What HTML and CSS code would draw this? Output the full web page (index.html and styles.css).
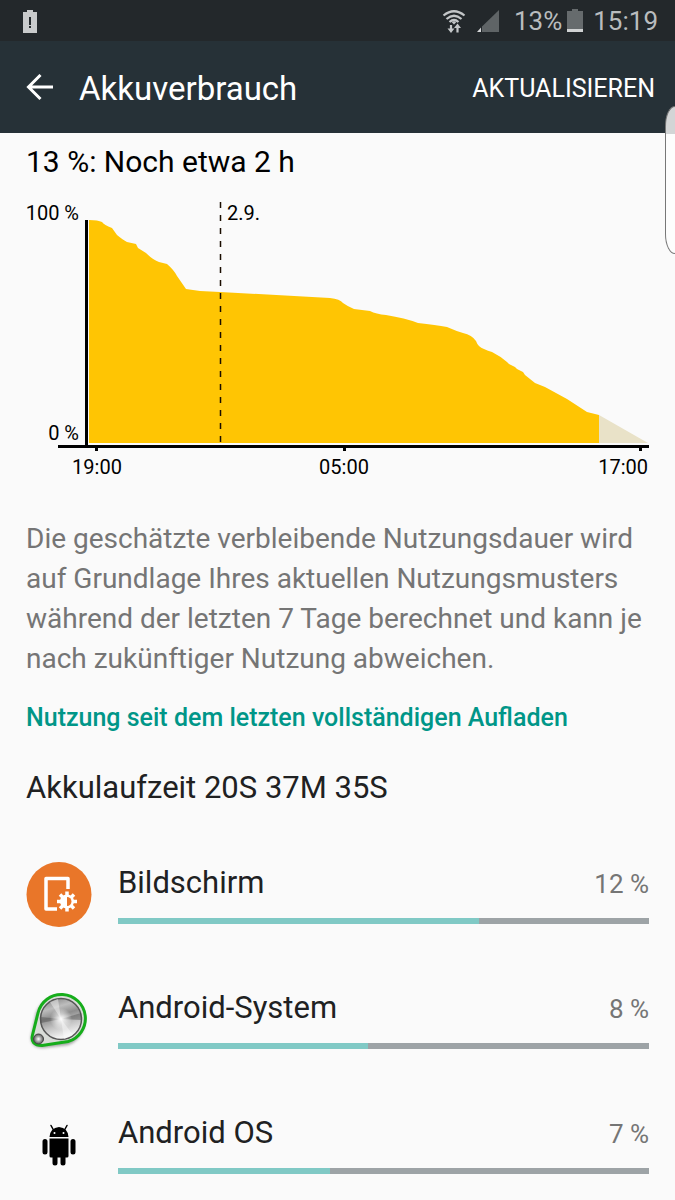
FILE: index.html
```html
<!DOCTYPE html>
<html lang="de">
<head>
<meta charset="utf-8">
<meta name="viewport" content="width=device-width, initial-scale=1">
<title>Akkuverbrauch</title>
<link rel="stylesheet" href="styles.css">
</head>
<body>
<div class="status">
  <svg class="status-alert" width="16" height="24" viewBox="0 0 16 24" role="img" aria-label="Akku schwach">
    <path fill="#c9cbcc" d="M5 1h6v2h4v21H1V3h4z"/>
    <path fill="#24292c" d="M7 8h2v8H7zM7 17h2v2H7z"/>
  </svg>
  <div class="status-right">
    <svg class="wifi" width="24" height="26" viewBox="0 0 24 26" role="img" aria-label="WLAN">
      <g fill="none" stroke="#c3c6c8" stroke-width="2.200">
        <path d="M1.500 7.500Q12-1 22.500 7.500"/>
        <path d="M4.500 11Q12 4.500 19.500 11"/>
        <path d="M7.500 14Q12 10 16.500 14"/>
        <path d="M9 17v5M15.500 24.500v-6"/>
      </g>
      <path fill="#c3c6c8" d="M9.800 14.300l2.200-1.300 2.200 1.300-2.200 2.200zM5.500 20.500h7L9 25zM12 20l3.500-4.500L19 20z"/>
    </svg>
    <svg class="signal" width="24" height="24" viewBox="0 0 24 24" role="img" aria-label="Mobilfunksignal">
      <path fill="#5f6466" d="M23 1v22H6V17.500z"/>
      <path fill="#d5d7d8" d="M5 18.500V23H1z"/>
    </svg>
    <span>13%</span>
    <svg class="battery" width="16" height="24" viewBox="0 0 16 24" role="img" aria-label="Akku">
      <path fill="#666b6d" d="M5 0h6v2h5v18H0V2h5z"/>
      <path fill="#d0d2d3" d="M0 20h16v3H0z"/>
    </svg>
    <span>15:19</span>
  </div>
</div>
<header class="appbar">
  <button class="back" type="button" aria-label="Zurück">
    <svg width="28" height="28" viewBox="0 0 28 28" aria-hidden="true"><path fill="none" stroke="#fff" stroke-width="3" d="M27 13H3M14.500 1L2.500 13l12 12"/></svg>
  </button>
  <h1 class="title">Akkuverbrauch</h1>
  <button class="refresh" type="button">AKTUALISIEREN</button>
  <div class="edge-handle"></div>
</header>
<main class="content">
  <h2 class="remaining">13 %: Noch etwa 2 h</h2>
  <svg class="chart" viewBox="0 0 623 288" role="img" aria-label="Akkuladung im Zeitverlauf">
    <path fill="#ffc503" d="M63 24Q72 24 76 26Q78 29 86 32L91 39Q97 44 101 46L110 48L112 52L120 57Q127 64 133 66L141 68Q148 74 151 80L160 93L174 95L194 96L304 102Q314 103 317 107Q321 110 328 113L344 115Q350 118 360 119Q379 122 392 127Q410 129 421 131Q430 135 437 137Q446 139 450 145Q452 151 458 153Q462 155 466 156Q474 160 481 166L483 168L489 171L491 173L497 176L499 179L509 187L519 191L541 203L561 216L573 219V247H63z"/>
    <path fill="#e9e2c8" d="M573 219L622 247H573z"/>
    <path stroke="#1a0d00" stroke-width="1.500" stroke-dasharray="6 7" d="M194.500 6V247"/>
    <path fill="#000" d="M59 24h3v225h-3zM32 249h591v3H32zM69 252h3v3h-3zM317 252h3v3h-3zM613 252h3v3h-3z"/>
    <text x="53" y="24" text-anchor="end">100 %</text>
    <text x="53" y="244" text-anchor="end">0 %</text>
    <text x="201" y="24">2.9.</text>
    <text x="71" y="278" text-anchor="middle">19:00</text>
    <text x="318" y="278" text-anchor="middle">05:00</text>
    <text x="622" y="278" text-anchor="end">17:00</text>
  </svg>
  <p class="note">Die geschätzte verbleibende Nutzungsdauer wird auf Grundlage Ihres aktuellen Nutzungsmusters während der letzten 7 Tage berechnet und kann je nach zukünftiger Nutzung abweichen.</p>
  <h2 class="section">Nutzung seit dem letzten vollständigen Aufladen</h2>
  <p class="runtime">Akkulaufzeit 20S 37M 35S</p>
  <ul class="apps">
    <li class="app">
      <svg class="app-icon" viewBox="0 0 66 66" aria-hidden="true">
        <circle cx="33" cy="32.500" r="32.500" fill="#e97629"/>
        <path fill="none" stroke="#fff" stroke-width="3.500" stroke-linejoin="round" d="M42 27V16.500H20V47H31"/>
        <circle cx="41" cy="39.500" r="7" fill="#fff"/>
        <path stroke="#fff" stroke-width="3.500" d="M41 29.500v20M31 39.500h20M34 32.500l14 14M48 32.500L34 46.500"/>
        <path fill="#e97629" d="M41 35a4.500 4.500 0 0 1 0 9z"/>
      </svg>
      <div class="usage">
        <div class="usage-head"><span>Bildschirm</span><span class="share">12 %</span></div>
        <div class="bar" role="progressbar" aria-label="Bildschirm" aria-valuenow="12"><div class="fill" style="width:68%"></div></div>
      </div>
    </li>
    <li class="app">
      <svg class="app-icon" viewBox="0 0 66 66" aria-hidden="true">
        <defs>
          <linearGradient id="metal" x1="0" y1="0" x2=".3" y2="1">
            <stop offset="0" stop-color="#777"/><stop offset=".3" stop-color="#bdbdbd"/><stop offset=".5" stop-color="#8e8e8e"/><stop offset=".75" stop-color="#c6c6c6"/><stop offset="1" stop-color="#f2f2f2"/>
          </linearGradient>
          <radialGradient id="glow"><stop offset="0" stop-color="#fff"/><stop offset="1" stop-color="#fff" stop-opacity="0"/></radialGradient>
          <radialGradient id="small"><stop offset="0" stop-color="#fff"/><stop offset="1" stop-color="#555"/></radialGradient>
          <filter id="shadow" x="-20%" y="-20%" width="140%" height="140%"><feGaussianBlur stdDeviation="1.500"/></filter>
        </defs>
        <path fill="#777" opacity=".7" filter="url(#shadow)" d="M10 26A25 25 0 1 1 42 58L16 61Q4 60 5 50z"/>
        <path fill="#d9dcd8" stroke="#16ad1b" stroke-width="3" d="M12 26A24 24 0 1 1 42 54.500L16 58.500Q4 58 6.500 48z"/>
        <circle cx="35" cy="32" r="20.500" fill="url(#metal)" stroke="#565656" stroke-width="1.500"/>
        <path fill="#444" opacity=".4" d="M35 32L15 30V36zM35 32L55 26V33z"/>
        <path fill="#fff" opacity=".4" d="M35 32L24 15 32 12zM35 32L38 52 47 48z"/>
        <circle cx="35" cy="32" r="11" fill="url(#glow)"/>
        <circle cx="12.500" cy="52" r="5" fill="url(#small)" stroke="#444"/>
      </svg>
      <div class="usage">
        <div class="usage-head"><span>Android-System</span><span class="share">8 %</span></div>
        <div class="bar" role="progressbar" aria-label="Android-System" aria-valuenow="8"><div class="fill" style="width:47%"></div></div>
      </div>
    </li>
    <li class="app">
      <svg class="app-icon" viewBox="0 0 66 66" aria-hidden="true">
        <path d="M23.500 25Q24 16 33 15Q42 16 42.500 25z"/>
        <path stroke="#000" stroke-width="1.500" stroke-linecap="round" d="M27.500 18L25 13.500M38.500 18L41 13.500"/>
        <circle cx="28.500" cy="21" r="1" fill="#fff"/><circle cx="37.500" cy="21" r="1" fill="#fff"/>
        <path d="M23.500 26.500h19V44q0 1.500-1.500 1.500H25q-1.500 0-1.500-1.500z"/>
        <path stroke="#000" stroke-width="5" stroke-linecap="round" d="M19 29.500v10.500M47 29.500v10.500M29 43v8M37 43v8"/>
      </svg>
      <div class="usage">
        <div class="usage-head"><span>Android OS</span><span class="share">7 %</span></div>
        <div class="bar" role="progressbar" aria-label="Android OS" aria-valuenow="7"><div class="fill" style="width:40%"></div></div>
      </div>
    </li>
  </ul>
</main>
</body>
</html>
```

FILE: styles.css
```css
* { box-sizing: border-box; }
body { margin: 0; background: #fafafa; color: #202122; font-family: Roboto, sans-serif; }
h1, h2, p, ul { margin: 0; padding: 0; font-weight: 400; }
svg { display: block; flex: none; }
button { border: 0; padding: 0; background: none; color: inherit; font: inherit; cursor: pointer; }

.status { display: flex; align-items: center; justify-content: space-between; height: 41px; padding: 0 17px 0 22px; background: #23282b; color: #b9bcbe; font-size: 26px; }
.status-right { display: flex; align-items: center; }
.signal { margin: 0 14px 0 10px; }
.battery { margin: 0 10px 0 5px; }

.appbar { position: relative; display: flex; align-items: center; height: 92px; padding: 2px 20px 0 26px; background: #263137; color: #fff; }
.title { margin-left: 25px; font-size: 33px; }
.refresh { margin-left: auto; font-size: 25px; }
.edge-handle { position: absolute; top: 65px; right: 0; width: 10px; height: 148px; border: 1px solid #777; border-right: 0; border-radius: 10px 0 0 10px / 20px 0 0 20px; background: linear-gradient(#d3d5d6 27px, #fdfdfd 27px); }

.content { padding: 11px 26px 20px; }
.remaining { color: #000; font-size: 30px; line-height: 36px; }
.chart { width: 100%; height: auto; margin-top: 16px; font-size: 20px; }
.note { margin-top: 35px; color: #757575; font-size: 28px; line-height: 40px; }
.section { margin-top: 23px; color: #009688; font-size: 25px; font-weight: 500; line-height: 32px; }
.runtime { margin-top: 36px; font-size: 31px; line-height: 36px; }

.apps { display: grid; gap: 59px; margin-top: 56px; list-style: none; }
.app { display: flex; gap: 26px; }
.app-icon { width: 66px; height: 66px; }
.usage { flex: 1; display: grid; align-content: start; gap: 14px; }
.usage-head { display: flex; justify-content: space-between; font-size: 31px; line-height: 42px; }
.share { color: #757575; font-size: 26px; line-height: 44px; height: 42px; }
.bar { height: 6px; background: #9da3a6; }
.fill { height: 100%; background: #80c9c5; }
```
